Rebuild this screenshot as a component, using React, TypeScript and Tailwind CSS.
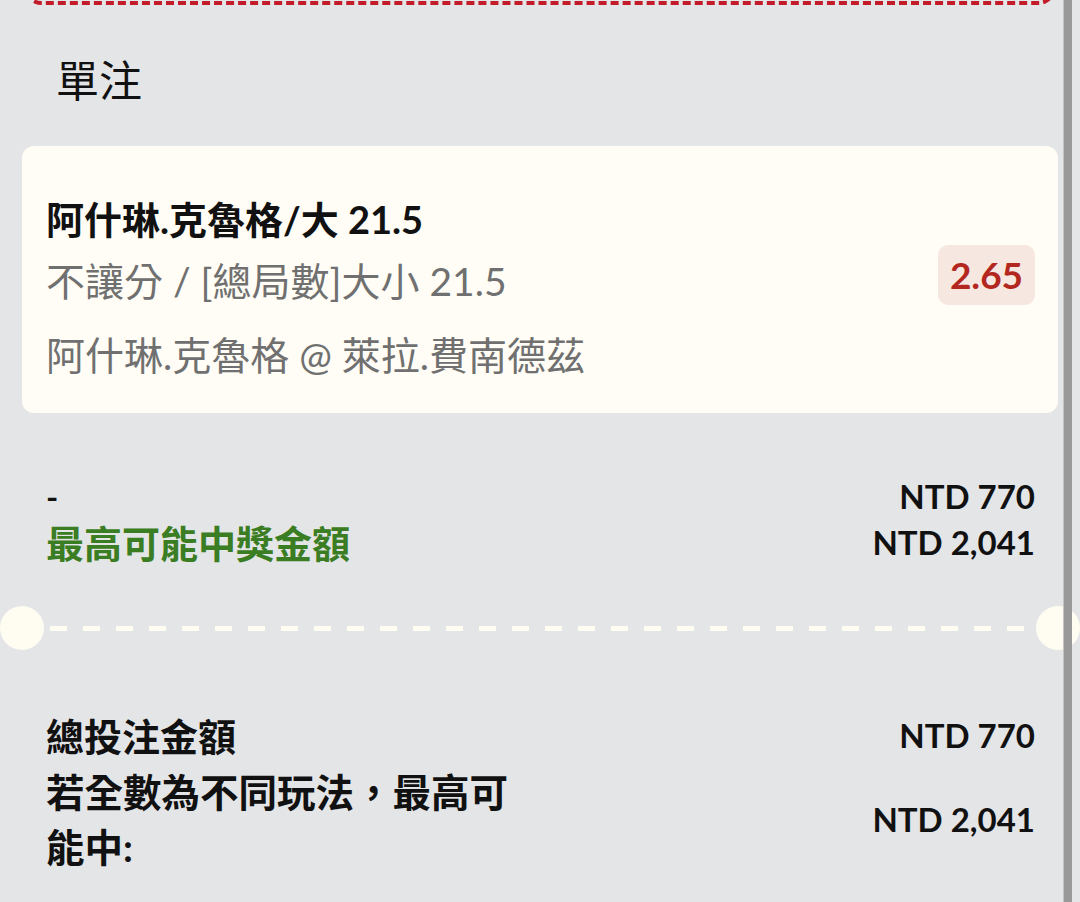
import React from "react";

const font = "font-['Lato','Noto_Sans_CJK_TC',sans-serif]";

function Divider() {
  return (
    <div className="flex items-center mt-[39px]">
      <div className="w-[44px] h-[44px] rounded-full bg-[#fffdf2] shrink-0" />
      <div className="flex-1 px-[6px]">
        <div className="h-[5px] bg-[repeating-linear-gradient(90deg,#fffdf2_0_17px,transparent_17px_33px)]" />
      </div>
      <div className="w-[44px] h-[44px] rounded-full bg-[#fffdf2] shrink-0" />
    </div>
  );
}

export default function App() {
  return (
    <main className={`relative w-[1080px] h-[902px] overflow-hidden bg-[#e4e5e7] text-[#111] ${font}`}>
      {/* previous card, only its bottom edge shows */}
      <div className="mx-[25px] -mt-[55px] h-[60px] rounded-[16px] border-[4px] border-dashed border-[#c41b2b]" />

      <h2 className="mt-[51px] pl-[56px] text-[43px] leading-[50px] font-normal">單注</h2>

      <div className="mx-[22px] mt-[40px] rounded-[12px] bg-[#fffdf5] pl-[24px] pr-[23px] pt-[45px] pb-[26px] flex items-center justify-between">
        <div>
          <div className="text-[38px] leading-[56px] font-bold">阿什琳.克魯格/大 21.5</div>
          <div className="mt-[2px] text-[39px] leading-[64px] text-[#707070]">不讓分 / [總局數]大小 21.5</div>
          <div className="mt-[10px] text-[39px] leading-[64px] text-[#707070]">阿什琳.克魯格 @ 萊拉.費南德茲</div>
        </div>
        <div className="-mt-[28px] w-[97px] h-[60px] rounded-[10px] bg-[#f6e7e1] flex items-center justify-center text-[37px] font-bold text-[#b3271e]">
          2.65
        </div>
      </div>

      <div className="mt-[62px] pl-[46px] pr-[45px]">
        <div className="flex items-center justify-between h-[44px]">
          <span className="text-[33px] font-bold">-</span>
          <span className="text-[33px] font-bold">NTD 770</span>
        </div>
        <div className="flex items-center justify-between h-[48px]">
          <span className="text-[38px] font-bold text-[#3a7d22]">最高可能中獎金額</span>
          <span className="text-[33px] font-bold">NTD 2,041</span>
        </div>
      </div>

      <Divider />

      <div className="mt-[60px] pl-[46px] pr-[45px]">
        <div className="flex items-center justify-between h-[52px]">
          <span className="text-[38px] font-bold">總投注金額</span>
          <span className="text-[33px] font-bold">NTD 770</span>
        </div>
        <div className="mt-[3px] flex items-center justify-between">
          <span className="w-[480px] text-[38.5px] leading-[55px] font-bold">若全數為不同玩法，最高可能中:</span>
          <span className="text-[33px] font-bold">NTD 2,041</span>
        </div>
      </div>

      {/* scrollbar */}
      <div className="absolute top-0 bottom-0 right-[8px] w-[9px] bg-[#999999] border-l border-[#c4c4c4]" />
    </main>
  );
}
